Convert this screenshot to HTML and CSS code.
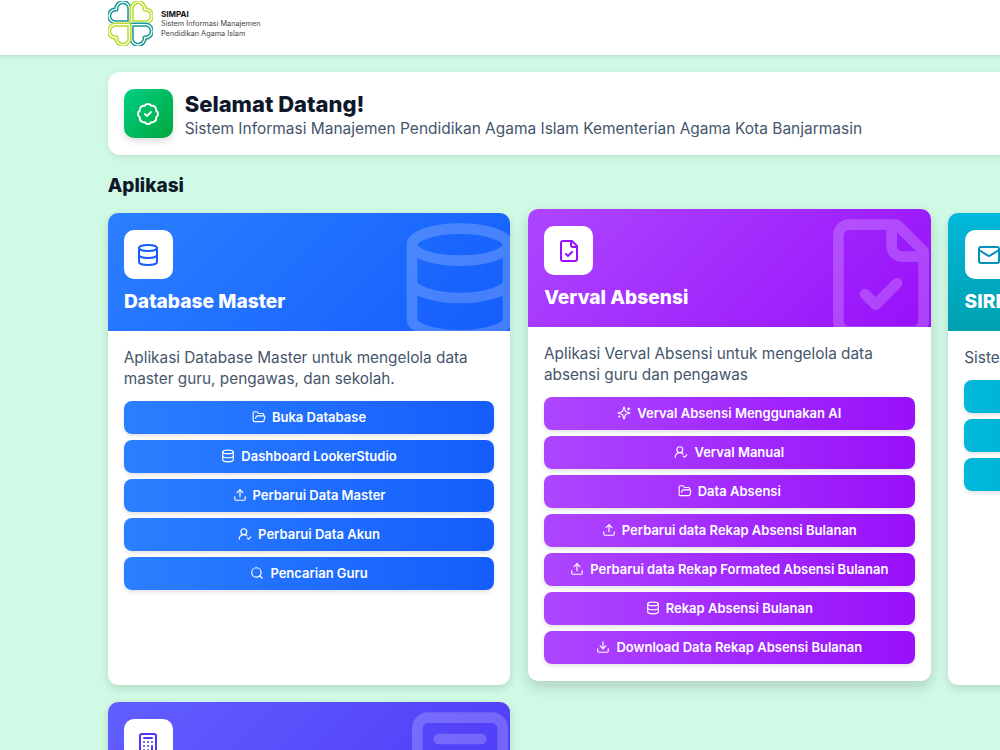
FILE: index.html
```html
<!DOCTYPE html>
<html lang="en">

<head>
    <meta charset="UTF-8">
    <meta name="viewport" content="width=device-width, initial-scale=1.0">
    <title>SIMPAI</title>
    <link rel="stylesheet" href="styles.css">
</head>

<body>
    <svg class="sprite" xmlns="http://www.w3.org/2000/svg">
        <symbol id="i-db" viewBox="0 0 24 24"><ellipse cx="12" cy="5" rx="9" ry="3"/><path d="M3 5V19A9 3 0 0 0 21 19V5"/><path d="M3 12A9 3 0 0 0 21 12"/></symbol>
        <symbol id="i-file" viewBox="0 0 24 24"><path d="M15 2H6a2 2 0 0 0-2 2v16a2 2 0 0 0 2 2h12a2 2 0 0 0 2-2V7Z"/><path d="M14 2v4a2 2 0 0 0 2 2h4"/><path d="m9 15 2 2 4-4"/></symbol>
        <symbol id="i-mail" viewBox="0 0 24 24"><rect x="2" y="4" width="20" height="16" rx="2"/><path d="m22 7-8.97 5.7a1.94 1.94 0 0 1-2.06 0L2 7"/></symbol>
        <symbol id="i-calc" viewBox="0 0 24 24"><rect x="4" y="2" width="16" height="20" rx="2"/><line x1="8" x2="16" y1="6" y2="6"/><line x1="16" x2="16" y1="14" y2="18"/><path d="M16 10h.01M12 10h.01M8 10h.01M12 14h.01M8 14h.01M12 18h.01M8 18h.01"/></symbol>
        <symbol id="i-badge" viewBox="0 0 24 24"><path d="M3.85 8.62a4 4 0 0 1 4.78-4.77 4 4 0 0 1 6.74 0 4 4 0 0 1 4.78 4.78 4 4 0 0 1 0 6.74 4 4 0 0 1-4.77 4.78 4 4 0 0 1-6.75 0 4 4 0 0 1-4.78-4.77 4 4 0 0 1 0-6.76Z"/><path d="m9 12 2 2 4-4"/></symbol>
        <symbol id="i-folder" viewBox="0 0 24 24"><path d="m6 14 1.5-2.9A2 2 0 0 1 9.24 10H20a2 2 0 0 1 1.94 2.5l-1.54 6a2 2 0 0 1-1.95 1.5H4a2 2 0 0 1-2-2V5a2 2 0 0 1 2-2h3.9a2 2 0 0 1 1.69.9l.81 1.2a2 2 0 0 0 1.69.9H18a2 2 0 0 1 2 2v2"/></symbol>
        <symbol id="i-upload" viewBox="0 0 24 24"><path d="M21 15v4a2 2 0 0 1-2 2H5a2 2 0 0 1-2-2v-4"/><path d="m17 8-5-5-5 5"/><path d="M12 3v12"/></symbol>
        <symbol id="i-download" viewBox="0 0 24 24"><path d="M21 15v4a2 2 0 0 1-2 2H5a2 2 0 0 1-2-2v-4"/><path d="m7 10 5 5 5-5"/><path d="M12 15V3"/></symbol>
        <symbol id="i-user" viewBox="0 0 24 24"><path d="M2 21a8 8 0 0 1 13.292-5.96"/><circle cx="10" cy="8" r="5"/><path d="m16 19 2 2 4-4"/></symbol>
        <symbol id="i-search" viewBox="0 0 24 24"><circle cx="11" cy="11" r="8"/><path d="m21 21-4.3-4.3"/></symbol>
        <symbol id="i-sparkles" viewBox="0 0 24 24"><path d="M9.937 15.5A2 2 0 0 0 8.5 14.063l-6.135-1.582a.5.5 0 0 1 0-.962L8.5 9.936A2 2 0 0 0 9.937 8.5l1.582-6.135a.5.5 0 0 1 .963 0L14.063 8.5A2 2 0 0 0 15.5 9.937l6.135 1.581a.5.5 0 0 1 0 .964L15.5 14.063a2 2 0 0 0-1.437 1.437l-1.582 6.135a.5.5 0 0 1-.963 0z"/><path d="M20 3v4M22 5h-4M4 17v2M5 18H3"/></symbol>
    </svg>

    <header class="topbar">
        <div class="brand">
            <svg class="brand-logo" viewBox="-22 -22 44 44">
                <g class="heart heart-teal" transform="rotate(-45)"><path d="M0 -1.5 L-10 -11.5 A6.2 6.2 0 0 1 0 -19.5 A6.2 6.2 0 0 1 10 -11.5 Z"/><path class="heart-gap" d="M0 -1.5 L-10 -11.5 A6.2 6.2 0 0 1 0 -19.5 A6.2 6.2 0 0 1 10 -11.5 Z"/></g>
                <g class="heart heart-lime" transform="rotate(45)"><path d="M0 -1.5 L-10 -11.5 A6.2 6.2 0 0 1 0 -19.5 A6.2 6.2 0 0 1 10 -11.5 Z"/><path class="heart-gap" d="M0 -1.5 L-10 -11.5 A6.2 6.2 0 0 1 0 -19.5 A6.2 6.2 0 0 1 10 -11.5 Z"/></g>
                <g class="heart heart-teal" transform="rotate(135)"><path d="M0 -1.5 L-10 -11.5 A6.2 6.2 0 0 1 0 -19.5 A6.2 6.2 0 0 1 10 -11.5 Z"/><path class="heart-gap" d="M0 -1.5 L-10 -11.5 A6.2 6.2 0 0 1 0 -19.5 A6.2 6.2 0 0 1 10 -11.5 Z"/></g>
                <g class="heart heart-lime" transform="rotate(225)"><path d="M0 -1.5 L-10 -11.5 A6.2 6.2 0 0 1 0 -19.5 A6.2 6.2 0 0 1 10 -11.5 Z"/><path class="heart-gap" d="M0 -1.5 L-10 -11.5 A6.2 6.2 0 0 1 0 -19.5 A6.2 6.2 0 0 1 10 -11.5 Z"/></g>
            </svg>
            <div class="brand-text">
                <strong>SIMPAI</strong>
                <span>Sistem Informasi Manajemen</span>
                <span>Pendidikan Agama Islam</span>
            </div>
        </div>
    </header>

    <main class="content">
        <section class="welcome">
            <div class="welcome-icon"><svg class="icon"><use href="#i-badge"/></svg></div>
            <div>
                <h1>Selamat Datang!</h1>
                <p>Sistem Informasi Manajemen Pendidikan Agama Islam Kementerian Agama Kota Banjarmasin</p>
            </div>
        </section>

        <h2 class="section-title">Aplikasi</h2>

        <div class="app-grid">
            <article class="card blue">
                <div class="card-head">
                    <svg class="head-bg"><use href="#i-db"/></svg>
                    <div class="head-icon"><svg class="icon"><use href="#i-db"/></svg></div>
                    <h3>Database Master</h3>
                </div>
                <div class="card-body">
                    <p>Aplikasi Database Master untuk mengelola data master guru, pengawas, dan sekolah.</p>
                    <a class="btn"><svg class="btn-icon"><use href="#i-folder"/></svg>Buka Database</a>
                    <a class="btn"><svg class="btn-icon"><use href="#i-db"/></svg>Dashboard LookerStudio</a>
                    <a class="btn"><svg class="btn-icon"><use href="#i-upload"/></svg>Perbarui Data Master</a>
                    <a class="btn"><svg class="btn-icon"><use href="#i-user"/></svg>Perbarui Data Akun</a>
                    <a class="btn"><svg class="btn-icon"><use href="#i-search"/></svg>Pencarian Guru</a>
                </div>
            </article>

            <article class="card purple raised">
                <div class="card-head">
                    <svg class="head-bg"><use href="#i-file"/></svg>
                    <div class="head-icon"><svg class="icon"><use href="#i-file"/></svg></div>
                    <h3>Verval Absensi</h3>
                </div>
                <div class="card-body">
                    <p>Aplikasi Verval Absensi untuk mengelola data absensi guru dan pengawas</p>
                    <a class="btn"><svg class="btn-icon"><use href="#i-sparkles"/></svg>Verval Absensi Menggunakan AI</a>
                    <a class="btn"><svg class="btn-icon"><use href="#i-user"/></svg>Verval Manual</a>
                    <a class="btn"><svg class="btn-icon"><use href="#i-folder"/></svg>Data Absensi</a>
                    <a class="btn"><svg class="btn-icon"><use href="#i-upload"/></svg>Perbarui data Rekap Absensi Bulanan</a>
                    <a class="btn"><svg class="btn-icon"><use href="#i-upload"/></svg>Perbarui data Rekap Formated Absensi Bulanan</a>
                    <a class="btn"><svg class="btn-icon"><use href="#i-db"/></svg>Rekap Absensi Bulanan</a>
                    <a class="btn"><svg class="btn-icon"><use href="#i-download"/></svg>Download Data Rekap Absensi Bulanan</a>
                </div>
            </article>

            <article class="card cyan">
                <div class="card-head">
                    <svg class="head-bg"><use href="#i-mail"/></svg>
                    <div class="head-icon"><svg class="icon"><use href="#i-mail"/></svg></div>
                    <h3>SIREKAP</h3>
                </div>
                <div class="card-body">
                    <p>Sistem Rekap Surat Elektronik</p>
                    <a class="btn"></a>
                    <a class="btn"></a>
                    <a class="btn"></a>
                </div>
            </article>

            <article class="card indigo">
                <div class="card-head">
                    <svg class="head-bg"><use href="#i-calc"/></svg>
                    <div class="head-icon"><svg class="icon"><use href="#i-calc"/></svg></div>
                </div>
            </article>
        </div>
    </main>
</body>

</html>
```

FILE: styles.css
```css
* {
    box-sizing: border-box;
}

html,
body {
    height: 750px;
    overflow: hidden;
}

body {
    margin: 0;
    font-family: Inter, "Noto Sans", sans-serif;
    background-color: #d0fae5;
    color: #0f172b;
}

.sprite {
    display: none;
}

.sprite symbol,
.icon,
.btn-icon,
.head-bg {
    fill: none;
    stroke: currentColor;
    stroke-width: 2;
    stroke-linecap: round;
    stroke-linejoin: round;
}

/* top bar */
.topbar {
    height: 55px;
    padding-left: 108px;
    background: white;
    box-shadow: 0 1px 4px rgba(0, 0, 0, 0.15);
}

.brand {
    display: flex;
    align-items: flex-start;
    gap: 8px;
}

.brand-logo {
    width: 45px;
    height: 45px;
    margin-top: 1px;
}

.heart path {
    fill: none;
    stroke-width: 4.2;
    stroke-linejoin: round;
}

.heart-teal path {
    stroke: #1a9a98;
}

.heart-lime path {
    stroke: #b9dd2e;
}

.heart .heart-gap {
    stroke: white;
    stroke-width: 1.2;
}

.brand-text {
    display: flex;
    flex-direction: column;
    padding-top: 10px;
    font-size: 7.3px;
    line-height: 9.3px;
    color: #444;
    white-space: nowrap;
}

.brand-text strong {
    font-size: 8px;
    color: #111;
}

/* page */
.content {
    width: 1350.3px;
    padding: 17px 0 0 107.7px;
}

.welcome {
    display: flex;
    align-items: center;
    gap: 12px;
    height: 83px;
    padding: 0 16px;
    background: white;
    border-radius: 12px;
    box-shadow: 0 2px 6px rgba(0, 0, 0, 0.1);
}

.welcome-icon {
    display: flex;
    align-items: center;
    justify-content: center;
    width: 49px;
    height: 49px;
    border-radius: 10px;
    color: white;
    background: linear-gradient(135deg, #00d084, #00a63e);
    box-shadow: 0 4px 6px rgba(0, 0, 0, 0.12);
}

.welcome h1 {
    margin: 0;
    font-size: 22px;
    line-height: 30px;
    font-weight: 800;
}

.welcome p {
    margin: 0;
    font-size: 15.48px;
    line-height: 19px;
    color: #45556c;
}

.section-title {
    margin: 17px 0 14px;
    font-size: 19px;
    line-height: 27px;
    font-weight: 800;
}

.app-grid {
    display: grid;
    grid-template-columns: repeat(3, 402.7px);
    grid-auto-rows: 472px;
    gap: 17px 17.6px;
}

.card {
    overflow: hidden;
    background: white;
    border-radius: 10px;
    box-shadow: 0 3px 8px rgba(0, 0, 0, 0.14);
}

.raised {
    margin-top: -4px;
    margin-bottom: 4px;
    box-shadow: 0 6px 14px rgba(0, 0, 0, 0.16);
}

.card-head {
    position: relative;
    overflow: hidden;
    height: 118.4px;
    padding: 17px 16.3px 0;
    color: white;
}

.head-bg {
    position: absolute;
    top: 5px;
    right: -14px;
    width: 128px;
    height: 128px;
    opacity: 0.2;
}

.head-icon {
    display: flex;
    align-items: center;
    justify-content: center;
    width: 49px;
    height: 49px;
    background: white;
    border-radius: 10px;
}

.card-head h3 {
    margin: 7.6px 0 0;
    font-size: 19.2px;
    line-height: 28px;
    font-weight: 800;
}

.card-body {
    display: flex;
    flex-direction: column;
    gap: 6px;
    padding: 16px;
}

.card-body p {
    margin: 0 0 5.6px;
    font-size: 15.35px;
    line-height: 21px;
    color: #45556c;
}

.btn {
    display: flex;
    align-items: center;
    justify-content: center;
    gap: 6px;
    height: 33px;
    padding-bottom: 1px;
    border-radius: 8px;
    color: white;
    font-size: 13px;
    font-weight: 600;
    box-shadow: 0 2px 4px rgba(0, 0, 0, 0.12);
}

.btn-icon {
    width: 14px;
    height: 14px;
}

.icon {
    width: 24px;
    height: 24px;
}

/* card colours */
.blue .card-head {
    background: linear-gradient(135deg, #2b7fff, #155dfc);
}

.blue .head-icon {
    color: #155dfc;
}

.blue .btn {
    background: linear-gradient(90deg, #2b7fff, #155dfc);
}

.purple .card-head {
    background: linear-gradient(135deg, #ad46ff, #9810fa);
}

.purple .head-icon {
    color: #9810fa;
}

.purple .btn {
    background: linear-gradient(90deg, #ad46ff, #9810fa);
}

.cyan .card-head {
    background: linear-gradient(180deg, #00b8db, #00a0ae);
}

.cyan .head-icon {
    color: #0092b8;
}

.cyan .btn {
    background: linear-gradient(90deg, #00b8db, #0092b8);
}

.indigo .card-head {
    background: linear-gradient(135deg, #615fff, #4f39f6);
}

.indigo .head-icon {
    color: #4f39f6;
}
```
